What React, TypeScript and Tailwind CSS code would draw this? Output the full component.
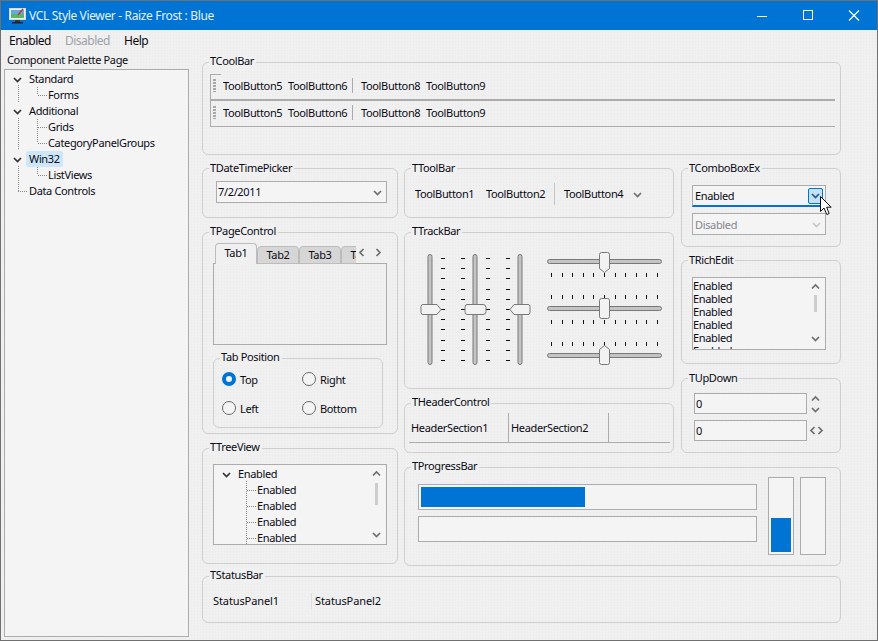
import React from 'react';

const Chevron: React.FC<{ dir?: 'up' | 'down' | 'left' | 'right'; color?: string; className?: string }> = ({ dir = 'down', color = '#6e6e6e', className = '' }) => {
  const points = {
    down: '1,3 4.5,6.5 8,3',
    up: '1,6.5 4.5,3 8,6.5',
    left: '6.5,1 3,4.5 6.5,8',
    right: '2.5,1 6,4.5 2.5,8',
  }[dir];
  return (
    <svg width="9" height="9" viewBox="0 0 9 9" className={`shrink-0 ${className}`}>
      <polyline points={points} fill="none" stroke={color} strokeWidth="1.7" />
    </svg>
  );
};

const Group: React.FC<{ title: string; low?: boolean; className?: string; children?: React.ReactNode }> = ({ title, low, className = '', children }) => (
  <div className={`relative rounded-[6px] border border-[#cfcfcf] ${className}`}>
    <span className={`absolute left-[6px] ${low ? 'top-[-8px]' : 'top-[-9px]'} bg-[#f0f0f0] pl-px pr-[2px] leading-[14px] whitespace-nowrap`}>{title}</span>
    {children}
  </div>
);

const ToolRow: React.FC = () => (
  <div className="flex h-[25px] items-center pb-[2px] pl-[2px]">
    <span className="h-[13px] w-[3px] bg-[repeating-linear-gradient(to_bottom,#a8a8a8_0,#a8a8a8_2px,transparent_2px,transparent_3px)]" />
    <span className="ml-[7px] w-[65px]">ToolButton5</span>
    <span className="w-[64px]">ToolButton6</span>
    <span className="mr-[8px] h-[15px] w-px bg-[#ababab]" />
    <span className="w-[65px]">ToolButton8</span>
    <span>ToolButton9</span>
  </div>
);

const TreeRow: React.FC<{ level?: number; label: string; expanded?: boolean; selected?: boolean }> = ({ level = 0, label, expanded, selected }) => (
  <div className={`flex h-[16px] items-center ${level === 1 ? 'pl-[43px]' : 'pl-[8px]'}`}>
    {level === 0 && (expanded ? <Chevron color="#333333" /> : <span className="w-[9px]" />)}
    <span className={`${level === 0 ? 'ml-[4px]' : ''} rounded-[2px] px-[3px] leading-[16px] ${selected ? 'bg-[#cde6fa]' : ''} ${level === 1 ? '-ml-[3px]' : ''}`}>{label}</span>
  </div>
);

const Guides: React.FC<{ lines: [number, number, number, number][] }> = ({ lines }) => (
  <svg className="pointer-events-none absolute inset-0 h-full w-full">
    {lines.map(([x1, y1, x2, y2], i) => (
      <line key={i} x1={x1} y1={y1} x2={x2} y2={y2} stroke="#8a8a8a" strokeDasharray="1 1" shapeRendering="crispEdges" />
    ))}
  </svg>
);

const Radio: React.FC<{ label: string; checked?: boolean }> = ({ label, checked }) => (
  <div className="flex h-[14px] items-center gap-[4px]">
    {checked ? (
      <span className="flex h-[14px] w-[14px] items-center justify-center rounded-full bg-[#0074d4]">
        <span className="h-[6px] w-[6px] rounded-full bg-[#f4f4f4]" />
      </span>
    ) : (
      <span className="h-[14px] w-[14px] rounded-full border border-[#6a6a6a] bg-[#f4f4f4]" />
    )}
    <span className="pt-px">{label}</span>
  </div>
);

const TICKS = [0, 1, 2, 3, 4, 5, 6, 7, 8, 9, 10];
const TRACK = '#c4c4c4';
const TRACK_EDGE = '#787878';
const THUMB = '#f2f2f2';

const VTrack: React.FC<{ kind: 'right' | 'both' | 'left' }> = ({ kind }) => {
  const cx = 20;
  const cy = 71.5;
  const thumb = {
    right: `M${cx - 7},${cy - 5} H${cx + 7} L${cx + 11},${cy} L${cx + 7},${cy + 5} H${cx - 7} Q${cx - 9},${cy + 5} ${cx - 9},${cy + 3} V${cy - 3} Q${cx - 9},${cy - 5} ${cx - 7},${cy - 5} Z`,
    both: `M${cx - 8},${cy - 5} H${cx + 8} Q${cx + 11},${cy - 5} ${cx + 11},${cy - 2} V${cy + 2} Q${cx + 11},${cy + 5} ${cx + 8},${cy + 5} H${cx - 8} Q${cx - 10},${cy + 5} ${cx - 10},${cy + 2} V${cy - 2} Q${cx - 10},${cy - 5} ${cx - 8},${cy - 5} Z`,
    left: `M${cx + 8},${cy - 5} H${cx - 6} L${cx - 10},${cy} L${cx - 6},${cy + 5} H${cx + 8} Q${cx + 10},${cy + 5} ${cx + 10},${cy + 3} V${cy - 3} Q${cx + 10},${cy - 5} ${cx + 8},${cy - 5} Z`,
  }[kind];
  return (
    <svg width="40" height="141" className="shrink-0">
      <rect x={cx - 2} y="16.5" width="4" height="110" rx="2" fill={TRACK} stroke={TRACK_EDGE} />
      {TICKS.map((i) => {
        const y = Math.round(20 + i * 10.2) + 0.5;
        return (
          <g key={i} stroke="#111" shapeRendering="crispEdges">
            {kind !== 'left' && <line x1={cx + 11} x2={cx + 15} y1={y} y2={y} />}
            {kind !== 'right' && <line x1={cx - 14} x2={cx - 10} y1={y} y2={y} />}
          </g>
        );
      })}
      <path d={thumb} fill={THUMB} stroke={TRACK_EDGE} />
    </svg>
  );
};

const HTrack: React.FC<{ kind: 'down' | 'both' | 'up' }> = ({ kind }) => {
  const cx = 62.5;
  const cy = 23.5;
  const thumb = {
    down: `M${cx - 5},${cy - 7} Q${cx - 5},${cy - 9} ${cx - 3},${cy - 9} H${cx + 3} Q${cx + 5},${cy - 9} ${cx + 5},${cy - 7} V${cy + 7} L${cx},${cy + 11} L${cx - 5},${cy + 7} Z`,
    both: `M${cx - 5},${cy - 8} Q${cx - 5},${cy - 10} ${cx - 3},${cy - 10} H${cx + 3} Q${cx + 5},${cy - 10} ${cx + 5},${cy - 8} V${cy + 8} Q${cx + 5},${cy + 10} ${cx + 3},${cy + 10} H${cx - 3} Q${cx - 5},${cy + 10} ${cx - 5},${cy + 8} Z`,
    up: `M${cx - 5},${cy - 6} L${cx},${cy - 10} L${cx + 5},${cy - 6} V${cy + 7} Q${cx + 5},${cy + 9} ${cx + 3},${cy + 9} H${cx - 3} Q${cx - 5},${cy + 9} ${cx - 5},${cy + 7} Z`,
  }[kind];
  return (
    <svg width="125" height="47" className="block">
      <rect x="5.5" y={cy - 2} width="114" height="4" rx="2" fill={TRACK} stroke={TRACK_EDGE} />
      {TICKS.map((i) => {
        const x = Math.round(9 + i * 10.6) + 0.5;
        return (
          <g key={i} stroke="#111" shapeRendering="crispEdges">
            {kind !== 'up' && <line x1={x} x2={x} y1={cy + 11} y2={cy + 15} />}
            {kind !== 'down' && <line x1={x} x2={x} y1={cy - 14} y2={cy - 10} />}
          </g>
        );
      })}
      <path d={thumb} fill={THUMB} stroke={TRACK_EDGE} />
    </svg>
  );
};

const box = 'border border-[#acacac] bg-[#f4f4f4]';

const App: React.FC = () => {
  return (
    <div className="flex h-[641px] w-[878px] flex-col border border-[#707070] bg-[#f0f0f0] bg-[radial-gradient(#e9e9e9_1px,transparent_1px)] bg-[length:3px_3px] font-['Noto_Sans',sans-serif] text-[11px] leading-[16px] tracking-[-0.35px] text-[#0a0a14]">
      {/* title bar */}
      <div className="flex h-[29px] shrink-0 items-center bg-[#0074d4] pl-[8px] pr-[10px] text-[12px] tracking-[-0.35px] text-[#e6f2fc]">
        <svg width="17" height="16" viewBox="0 0 17 16" className="shrink-0">
          <rect x="0.5" y="0.5" width="16" height="11" fill="#e8f4ea" stroke="#d8d8d8" />
          <rect x="2" y="2" width="13" height="4" fill="#6aa8e0" />
          <rect x="2" y="6" width="13" height="4" fill="#58b868" />
          <line x1="9" y1="7" x2="14" y2="1" stroke="#c0392b" strokeWidth="1.5" />
          <rect x="6" y="12" width="5" height="2" fill="#333" />
          <rect x="3" y="14" width="11" height="1.5" fill="#222" />
        </svg>
        <span className="ml-[3px]">VCL Style Viewer - Raize Frost : Blue</span>
        <div className="ml-auto flex items-center">
          <svg width="46" height="29" className="shrink-0">
            <line x1="11" x2="21" y1="15.5" y2="15.5" stroke="#fff" />
          </svg>
          <svg width="46" height="29" className="shrink-0">
            <rect x="11.5" y="9.5" width="9" height="9" fill="none" stroke="#fff" />
          </svg>
          <svg width="29" height="29" className="shrink-0">
            <path d="M11 9.5 L21 19.5 M21 9.5 L11 19.5" stroke="#fff" strokeWidth="1.2" />
          </svg>
        </div>
      </div>

      {/* menu */}
      <div className="flex h-[20px] shrink-0 items-center pl-[8px] pt-px text-[12px] tracking-[-0.5px]">
        <span className="w-[56px]">Enabled</span>
        <span className="w-[59px] text-[#a0a0a8]">Disabled</span>
        <span>Help</span>
      </div>

      <div className="flex flex-1 overflow-hidden">
        {/* palette */}
        <div className="ml-[3px] flex w-[185px] shrink-0 flex-col pb-[3px] pt-[3px]">
          <span className="mb-[2px] ml-[3px] h-[14px] leading-[14px]">Component Palette Page</span>
          <div className={`relative flex-1 pt-px ${box}`}>
            <Guides
              lines={[
                [13.5, 15, 13.5, 32],
                [13.5, 48, 13.5, 80],
                [13.5, 96, 13.5, 121],
                [13, 121.5, 22, 121.5],
                [32.5, 17, 32.5, 25],
                [33, 25.5, 42, 25.5],
                [32.5, 49, 32.5, 73],
                [33, 57.5, 42, 57.5],
                [33, 73.5, 42, 73.5],
                [32.5, 97, 32.5, 105],
                [33, 105.5, 42, 105.5],
              ]}
            />
            <TreeRow label="Standard" expanded />
            <TreeRow level={1} label="Forms" />
            <TreeRow label="Additional" expanded />
            <TreeRow level={1} label="Grids" />
            <TreeRow level={1} label="CategoryPanelGroups" />
            <TreeRow label="Win32" expanded selected />
            <TreeRow level={1} label="ListViews" />
            <TreeRow label="Data Controls" />
          </div>
        </div>

        {/* controls */}
        <div className="ml-[13px] flex w-[639px] shrink-0 flex-col pt-[12px]">
          <Group title="TCoolBar" className="h-[93px] shrink-0 pl-[7px] pt-[11px]">
            <div className="relative w-[625px] border-b border-l border-[#acacac]">
              <span className="absolute left-0 top-0 h-px w-[10px] bg-[#acacac]" />
              <ToolRow />
              <div className="h-[2px] bg-[#acacac]" />
              <ToolRow />
            </div>
          </Group>

          <div className="mt-[13px] flex gap-[6px]">
            {/* first column */}
            <div className="flex w-[196px] shrink-0 flex-col gap-[14px]">
              <Group title="TDateTimePicker" low className="h-[50px] pl-[13px] pt-[12px]">
                <div className={`flex h-[22px] w-[171px] items-center justify-between pl-px pr-[4px] ${box}`}>
                  <span>7/2/2011</span>
                  <Chevron />
                </div>
              </Group>

              <Group title="TPageControl" className="h-[202px] pl-[10px] pt-[10px]">
                <div className="relative z-10 flex h-[21px] w-[174px] items-start pl-[2px]">
                  <div className="flex h-[21px] w-[141px] shrink-0 items-end overflow-hidden text-center">
                    <span className="h-[21px] w-[42px] shrink-0 rounded-t-[4px] border border-b-0 border-[#bcbcbc] bg-[#f0f0f0] pt-px">Tab1</span>
                    <span className="h-[18px] w-[42px] shrink-0 rounded-t-[4px] border border-[#bcbcbc] bg-[#d6d6d6]">Tab2</span>
                    <span className="h-[18px] w-[42px] shrink-0 rounded-t-[4px] border border-[#bcbcbc] bg-[#d6d6d6]">Tab3</span>
                    <span className="h-[18px] w-[42px] shrink-0 rounded-t-[4px] border border-[#bcbcbc] bg-[#d6d6d6]">Tab4</span>
                  </div>
                  <Chevron dir="left" className="ml-px mt-[5px]" />
                  <Chevron dir="right" className="ml-[8px] mt-[5px]" />
                </div>
                <div className="-mt-px h-[82px] w-[174px] border border-[#acacac]" />
                <Group title="Tab Position" className="mt-[13px] h-[70px] w-[170px] pl-[8px] pt-[13px]">
                  <div className="grid grid-cols-[80px_80px] gap-y-[15px]">
                    <Radio label="Top" checked />
                    <Radio label="Right" />
                    <Radio label="Left" />
                    <Radio label="Bottom" />
                  </div>
                </Group>
              </Group>

              <Group title="TTreeView" className="h-[116px] pl-[10px] pt-[15px]">
                <div className={`relative flex h-[81px] w-[174px] ${box}`}>
                  <div className="h-full flex-1 overflow-hidden pt-px">
                    <Guides
                      lines={[
                        [32.5, 16, 32.5, 80],
                        [33, 25.5, 42, 25.5],
                        [33, 41.5, 42, 41.5],
                        [33, 57.5, 42, 57.5],
                        [33, 73.5, 42, 73.5],
                      ]}
                    />
                    <TreeRow label="Enabled" expanded />
                    <TreeRow level={1} label="Enabled" />
                    <TreeRow level={1} label="Enabled" />
                    <TreeRow level={1} label="Enabled" />
                    <TreeRow level={1} label="Enabled" />
                  </div>
                  <div className="flex w-[20px] shrink-0 flex-col items-center pb-[5px] pt-[4px]">
                    <Chevron dir="up" />
                    <span className="mt-[5px] h-[22px] w-[3px] bg-[#cdcdcd]" />
                    <Chevron className="mt-auto" />
                  </div>
                </div>
              </Group>
            </div>

            {/* right columns */}
            <div className="flex flex-1 flex-col gap-[14px]">
              <div className="flex gap-[7px]">
                <div className="flex w-[270px] shrink-0 flex-col gap-[14px]">
                  <Group title="TToolBar" low className="flex h-[50px] items-center pl-[10px] pt-[2px]">
                    <span className="w-[71px]">ToolButton1</span>
                    <span className="w-[68px]">ToolButton2</span>
                    <span className="mr-[9px] h-[22px] w-px bg-[#c4c4c4]" />
                    <span className="w-[69px]">ToolButton4</span>
                    <Chevron />
                  </Group>

                  <Group title="TTrackBar" className="h-[157px] pl-[5px] pt-[5px]">
                    <div className="flex">
                      <div className="flex gap-[5px]">
                        <VTrack kind="right" />
                        <VTrack kind="both" />
                        <VTrack kind="left" />
                      </div>
                      <div className="ml-[2px]">
                        <HTrack kind="down" />
                        <HTrack kind="both" />
                        <HTrack kind="up" />
                      </div>
                    </div>
                  </Group>

                  <Group title="THeaderControl" className="h-[50px] pl-[4px] pt-[9px]">
                    <div className="flex h-[30px] w-[261px] items-center border-b border-[#acacac]">
                      <span className="flex h-full w-[100px] items-center border-r border-[#acacac] pl-[2px]">HeaderSection1</span>
                      <span className="flex h-full w-[100px] items-center border-r border-[#acacac] pl-[2px]">HeaderSection2</span>
                    </div>
                  </Group>
                </div>

                <div className="flex w-[160px] shrink-0 flex-col">
                  <Group title="TComboBoxEx" low className="h-[79px] pl-[10px] pt-[16px]">
                    <div className="relative z-10 flex h-[22px] w-[134px] items-center border border-b-2 border-[#acacac] border-b-[#0074d4] bg-[#f4f4f4] pl-[2px]">
                      <span className="pt-px">Enabled</span>
                      <span className="ml-auto mr-[2px] flex h-[16px] w-[15px] items-center justify-center rounded-[2px] border border-[#0074d4] bg-[#c6e0f8]">
                        <Chevron color="#1c5a94" />
                      </span>
                      <svg width="13" height="20" viewBox="0 0 13 20" className="absolute left-[127px] top-[10px] overflow-visible">
                        <path d="M0.5 0.5 V15.5 L4 12 L6.8 18.5 L9.2 17.5 L6.6 11.2 L11.2 11.2 Z" fill="#fff" stroke="#111" strokeLinejoin="round" />
                      </svg>
                    </div>
                    <div className={`mt-[6px] flex h-[22px] w-[134px] items-center pl-[2px] pr-[4px] text-[#85858f] ${box}`}>
                      <span className="pt-px">Disabled</span>
                      <Chevron color="#c8c8c8" className="ml-auto" />
                    </div>
                  </Group>

                  <Group title="TRichEdit" low className="mt-[13px] h-[104px] pl-[10px] pt-[16px]">
                    <div className={`flex h-[73px] w-[134px] ${box}`}>
                      <div className="h-full flex-1 overflow-hidden pt-px leading-[13px]">
                        <div>Enabled</div>
                        <div>Enabled</div>
                        <div>Enabled</div>
                        <div>Enabled</div>
                        <div>Enabled</div>
                        <div>Enabled</div>
                      </div>
                      <div className="flex w-[20px] shrink-0 flex-col items-center pb-[6px] pt-[4px]">
                        <Chevron dir="up" />
                        <span className="mt-[4px] h-[17px] w-[3px] bg-[#cdcdcd]" />
                        <Chevron className="mt-auto" />
                      </div>
                    </div>
                  </Group>

                  <Group title="TUpDown" low className="mt-[14px] h-[75px] pl-[12px] pt-[14px]">
                    <div className="flex items-center">
                      <div className={`flex h-[21px] w-[113px] items-center pl-px ${box}`}>0</div>
                      <div className="ml-[4px] flex flex-col gap-[2px]">
                        <Chevron dir="up" />
                        <Chevron />
                      </div>
                    </div>
                    <div className="mt-[6px] flex items-center">
                      <div className={`flex h-[21px] w-[113px] items-center pl-px ${box}`}>0</div>
                      <Chevron dir="left" className="ml-px" />
                      <Chevron dir="right" className="-ml-px" />
                    </div>
                  </Group>
                </div>
              </div>

              <Group title="TProgressBar" className="flex h-[99px] pl-[13px] pt-[9px]">
                <div className="mt-[7px] flex w-[339px] shrink-0 flex-col gap-[6px]">
                  <div className={`h-[26px] p-[2px] ${box}`}>
                    <div className="h-full w-[164px] bg-[#0074d4]" />
                  </div>
                  <div className={`h-[26px] ${box}`} />
                </div>
                <div className={`ml-[11px] flex h-[78px] w-[26px] flex-col justify-end p-[2px] ${box}`}>
                  <div className="h-[34px] bg-[#0074d4]" />
                </div>
                <div className={`ml-[6px] h-[78px] w-[26px] ${box}`} />
              </Group>
            </div>
          </div>

          <Group title="TStatusBar" className="mt-[10px] flex h-[47px] shrink-0 items-center pl-[10px] pt-[3px]">
            <span className="w-[98px] tracking-[-0.1px]">StatusPanel1</span>
            <span className="mr-[3px] h-[16px] w-px bg-[#dedede]" />
            <span className="tracking-[-0.1px]">StatusPanel2</span>
          </Group>
        </div>
      </div>
    </div>
  );
};

export default App;
